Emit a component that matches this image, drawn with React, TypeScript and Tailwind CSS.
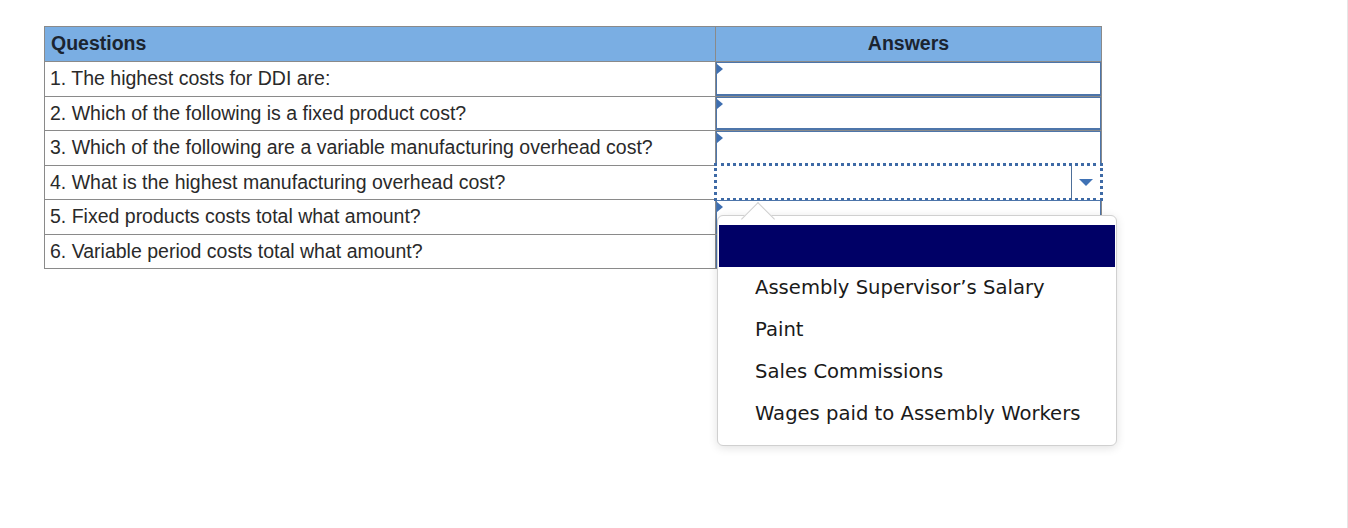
import React from 'react';

const questions = [
    '1. The highest costs for DDI are:',
    '2. Which of the following is a fixed product cost?',
    '3. Which of the following are a variable manufacturing overhead cost?',
    '4. What is the highest manufacturing overhead cost?',
    '5. Fixed products costs total what amount?',
    '6. Variable period costs total what amount?',
];

const rowHeights = ['h-[35px]', 'h-[34px]', 'h-[35px]', 'h-[34px]', 'h-[35px]', 'h-[34px]'];

const options = [
    'Assembly Supervisor\u2019s Salary',
    'Paint',
    'Sales Commissions',
    'Wages paid to Assembly Workers',
];

const AnswerBox: React.FC = () => (
    <div className="relative h-full w-full border border-[#4d75aa] border-b-2 bg-white">
        <div className="absolute left-0 top-[1px] w-0 h-0 border-y-[5px] border-y-transparent border-l-[6px] border-l-[#3f6fb0]" />
    </div>
);

const SelectBox: React.FC = () => (
    <div className="relative h-full w-full">
        <div className="absolute -left-[2px] -right-[2px] -top-[3px] -bottom-[2px] flex border-[3px] border-dotted border-[#3e6aa6] bg-white">
            <div className="flex-1" />
            <div className="w-[29px] border-l border-[#4d6f99] flex items-center justify-center">
                <div className="w-0 h-0 border-x-[7px] border-x-transparent border-t-[7px] border-t-[#3f72b5]" />
            </div>
        </div>
    </div>
);

const App: React.FC = () => {
    return (
        <div className="relative w-[1348px] h-[528px] bg-white overflow-hidden border-r border-[#e6e6e6] font-['Liberation_Sans',Arial,sans-serif]">
            <div className="pt-[26px] pl-[44px]">
                <table className="border-collapse text-[19.5px] text-[#2a2a2a]">
                    <thead>
                        <tr className="h-[35px] bg-[#7aaee3]">
                            <th className="w-[671px] border border-[#8a8a8a] px-[6px] py-0 text-left font-bold text-[#1b2430]">Questions</th>
                            <th className="w-[386px] border border-[#8a8a8a] py-0 text-center font-bold text-[#1b2430]">Answers</th>
                        </tr>
                    </thead>
                    <tbody>
                        {questions.map((q, i) => (
                            <tr key={i} className={rowHeights[i]}>
                                <td className="border border-[#8a8a8a] px-[5px] py-0 leading-none whitespace-nowrap">{q}</td>
                                <td className="border border-[#8a8a8a] p-0 h-[inherit]">
                                    <div className="h-full w-full">
                                        {i === 3 ? <SelectBox /> : <AnswerBox />}
                                    </div>
                                </td>
                            </tr>
                        ))}
                    </tbody>
                </table>
            </div>

            <div className="absolute left-[717px] top-[215px] w-[400px] h-[231px] bg-white border border-[#d0d0d0] rounded-[6px] shadow-[0_2px_10px_rgba(0,0,0,0.12)] font-['DejaVu_Sans',Verdana,sans-serif]">
                <div className="absolute left-[28px] -top-[12px] w-[24px] h-[24px] rotate-45 origin-center bg-white border-l border-t border-[#d0d0d0] translate-y-[3px]" />
                <div className="relative mt-[9px] mx-[1px] h-[42px] bg-[#000066]" />
                <ul className="relative">
                    {options.map(o => (
                        <li key={o} className="h-[42px] pl-[37px] flex items-center text-[19.6px] text-[#1a1a1a]">{o}</li>
                    ))}
                </ul>
            </div>
        </div>
    );
};

export default App;
